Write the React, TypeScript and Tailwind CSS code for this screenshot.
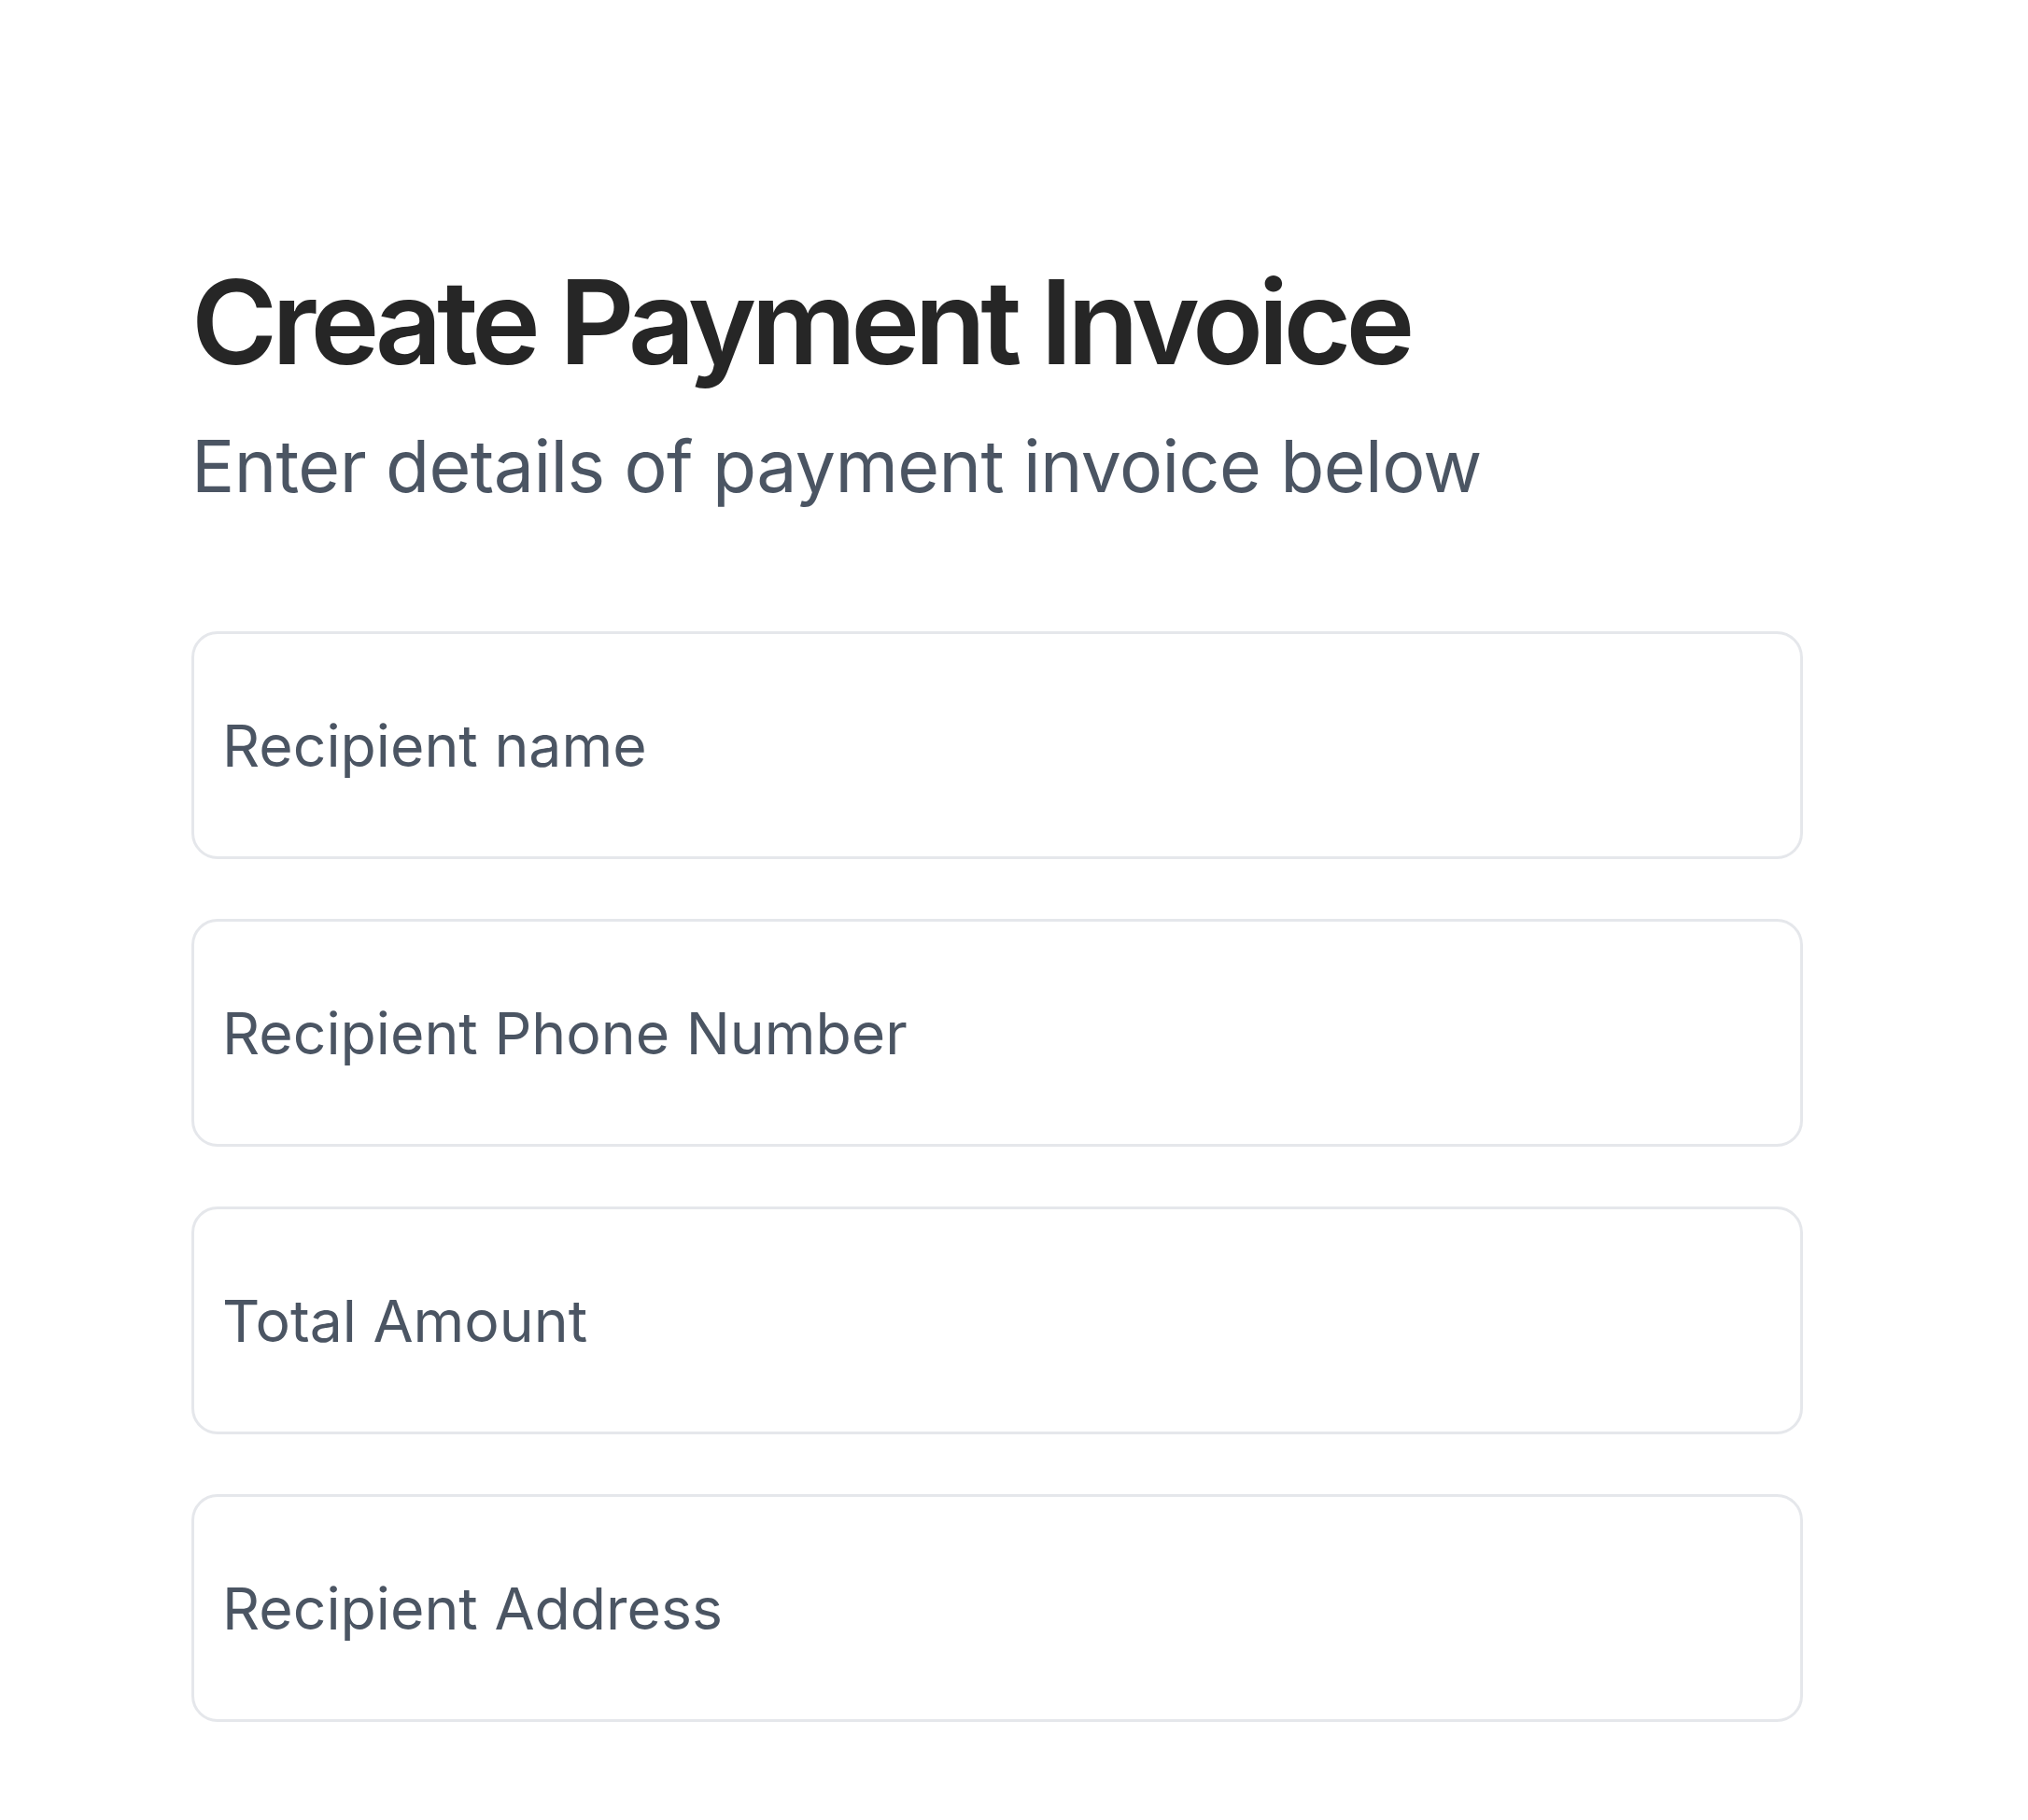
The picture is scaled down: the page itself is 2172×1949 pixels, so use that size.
import React from "react";

const fields = [
  "Recipient name",
  "Recipient Phone Number",
  "Total Amount",
  "Recipient Address",
];

export default function App() {
  return (
    <div
      className="min-h-screen bg-white pl-[205px] pr-[241px] pt-[282px]"
      style={{ fontFamily: "Inter, 'Noto Sans', sans-serif" }}
    >
      <h1 className="text-[125px] leading-none font-semibold tracking-[-0.046em] text-[#262626]">
        Create Payment Invoice
      </h1>
      <p className="mt-[54px] text-[77px] leading-none font-normal tracking-[-0.008em] text-[#4b5563]">
        Enter details of payment invoice below
      </p>
      <div className="mt-[138px] flex flex-col gap-[64px]">
        {fields.map((f) => (
          <input
            key={f}
            type="text"
            placeholder={f}
            className="h-[244px] w-full rounded-[28px] border-[3px] border-[#e5e7eb] bg-white px-[30px] text-[62.5px] text-[#4b5563] placeholder:text-[#4b5563] outline-none"
          />
        ))}
      </div>
    </div>
  );
}
